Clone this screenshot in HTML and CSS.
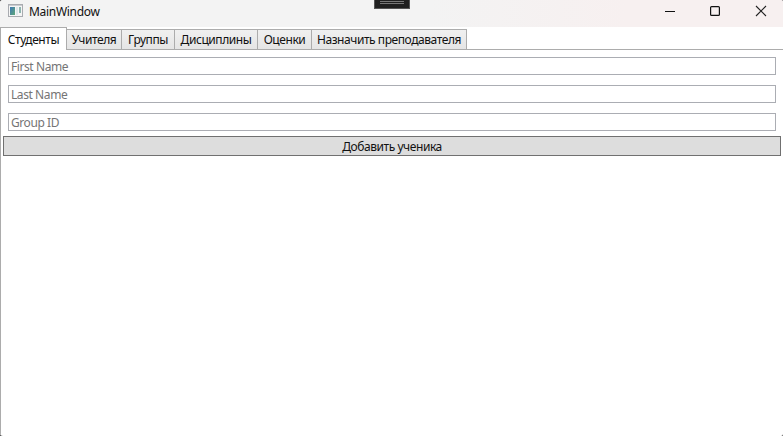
FILE: index.html
```
<!DOCTYPE html>
<html lang="ru">
<head>
<meta charset="utf-8">
<title>MainWindow</title>
<link rel="stylesheet" href="styles.css">
</head>
<body>
<div class="window">
  <header class="titlebar">
    <svg class="app-icon" width="16" height="14" viewBox="0 0 16 14">
      <defs><linearGradient id="g" x1="0" y1="0" x2="1" y2="1"><stop offset="0" stop-color="#3f78b5"/><stop offset="1" stop-color="#5da777"/></linearGradient></defs>
      <rect x=".5" y=".5" width="14" height="12" fill="#f5f5f5" stroke="#a9abb0"/>
      <path d="M1 1.5h13" stroke="#c9cbd0"/>
      <rect x="2" y="3" width="5" height="8" fill="url(#g)"/>
      <rect x="8" y="3" width="2" height="8" fill="#dce8ea"/>
      <rect x="11" y="3" width="2" height="6" fill="#8fb5b0"/>
    </svg>
    <span class="title">MainWindow</span>
    <div class="controls">
      <svg width="45" height="24" viewBox="0 0 45 24"><path d="M17 11.5h10" stroke="#111" fill="none"/></svg>
      <svg width="45" height="24" viewBox="0 0 45 24"><rect x="17.6" y="6.6" width="8.8" height="8.8" rx="1" stroke="#111" stroke-width="1.2" fill="none"/></svg>
      <svg width="45" height="24" viewBox="0 0 45 24"><path d="M18 6l10 10M28 6L18 16" stroke="#222" stroke-width="1.1" fill="none"/></svg>
    </div>
    <div class="debug-handle"></div>
  </header>
  <main class="client">
    <nav class="tabs">
      <div class="tab active"><span>Студенты</span></div>
      <div class="tab teachers"><span>Учителя</span></div>
      <div class="tab groups"><span>Группы</span></div>
      <div class="tab subjects"><span>Дисциплины</span></div>
      <div class="tab grades"><span>Оценки</span></div>
      <div class="tab assign"><span>Назначить преподавателя</span></div>
    </nav>
    <form class="panel">
      <div class="field">First Name</div>
      <div class="field">Last Name</div>
      <div class="field">Group ID</div>
      <button class="submit" type="button">Добавить ученика</button>
    </form>
  </main>
</div>
</body>
</html>
```
FILE: styles.css
```
* { box-sizing: border-box; }
body {
  margin: 0;
  background: #444;
  font: 12px/16px "Noto Sans", "Open Sans", sans-serif;
  color: #111;
  overflow: hidden;
}
.window {
  height: 436px;
  display: flex;
  flex-direction: column;
  background: #fff;
  border-radius: 3px 2px 2px 3px;
  overflow: hidden;
}
.titlebar {
  position: relative;
  height: 27px;
  display: flex;
  align-items: flex-start;
  padding-left: 8px;
  background: linear-gradient(90deg, #f3f3f3 0, #f3f3f3 55%, #f7f0f0 80%);
}
.app-icon { margin-top: 4px; }
.title { margin: 4px 0 0 5px; letter-spacing: -0.3px; }
.controls { display: flex; margin-left: auto; }
.debug-handle {
  position: absolute;
  left: 374px;
  top: 0;
  width: 36px;
  height: 9px;
  background: linear-gradient(#777, #777) 50% 1px / 24px 1px no-repeat,
    linear-gradient(#777, #777) 50% 3px / 24px 1px no-repeat, #202020;
  border: solid #555;
  border-width: 0 1px 1px;
}
.client { flex: 1; border-left: 1px solid #acacac; }
.tabs {
  display: flex;
  align-items: flex-end;
  height: 23px;
  border-bottom: 1px solid #acacac;
}
.tab {
  height: 21px;
  margin-bottom: -1px;
  padding-top: 1px;
  border: 1px solid #acacac;
  border-left-width: 0;
  background: linear-gradient(#f0f0f0, #e5e5e5);
  white-space: nowrap;
  display: flex;
  justify-content: center;
  align-items: center;
  letter-spacing: -0.43px;
}
.active { width: 66px; height: 23px; background: #fff; border-bottom: 0; }
.teachers { width: 55px; }
.groups { width: 53px; }
.subjects { width: 83px; }
.grades { width: 54px; }
.assign { width: 155px; }
.panel { display: flex; flex-direction: column; padding: 7px 2px 0; }
.field {
  height: 18px;
  margin: 0 5px 10px;
  padding: 1px 2px;
  border: 1px solid #abadb3;
  line-height: 16px;
  color: #757575;
  letter-spacing: -0.42px;
}
.submit {
  height: 20px;
  margin-top: -5px;
  padding: 2px 0 0;
  border: 1px solid #707070;
  border-radius: 0;
  background: #ddd;
  font: inherit;
  color: #111;
  letter-spacing: -0.43px;
}
```
